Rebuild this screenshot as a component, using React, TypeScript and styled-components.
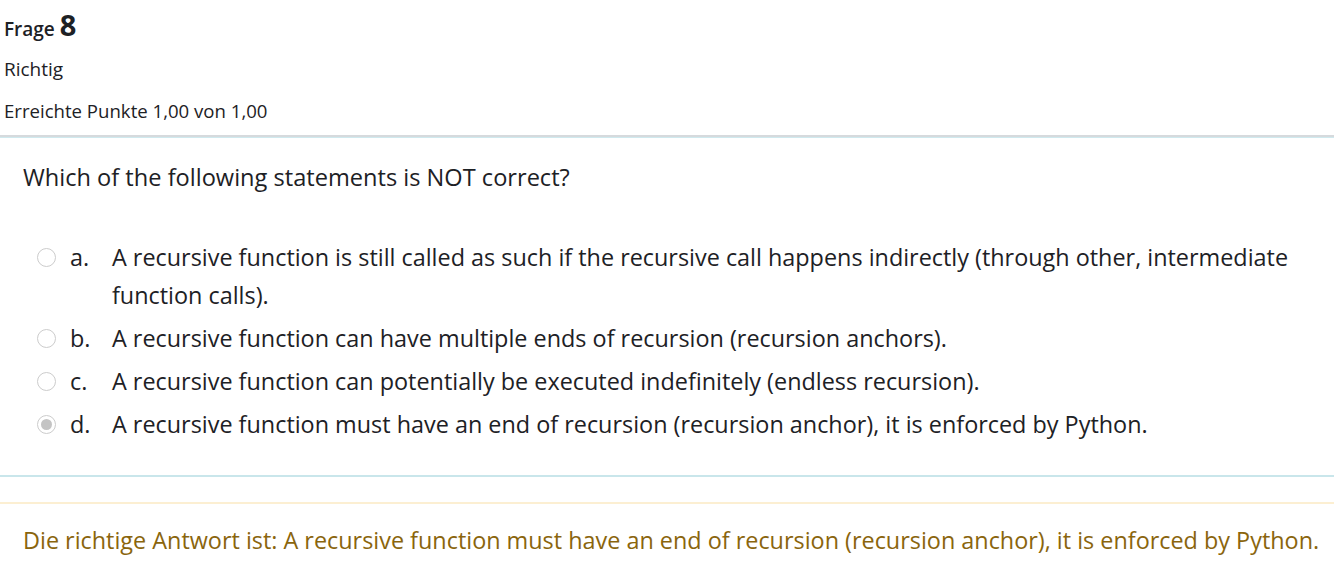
import styled, { createGlobalStyle } from 'styled-components'

const GlobalStyle = createGlobalStyle`
  html, body {
    margin: 0;
    padding: 0;
    background: #ffffff;
  }
  body {
    font-family: "Open Sans", "Noto Sans", sans-serif;
    color: #1d2125;
  }
`

const Page = styled.div`
  width: 1334px;
  height: 586px;
  overflow: hidden;
  background: #fff;
`

const Info = styled.div`
  padding: 10px 4px 0 4px;
`

const QuestionNo = styled.h3`
  margin: 0;
  font-size: 19px;
  font-weight: 600;
  line-height: 30px;
`

const Number = styled.span`
  font-size: 29px;
  font-weight: 700;
`

const State = styled.div`
  margin-top: 12px;
  font-size: 19px;
  line-height: 26px;
`

const Grade = styled.div`
  margin-top: 16px;
  font-size: 18.6px;
  line-height: 26px;
`

const Formulation = styled.div`
  margin-top: 11px;
  border-top: 2px solid #d6dadd;
  border-bottom: 2px solid #c9e6eb;
  box-shadow: inset 0 1px 0 #cfe9ee;
  padding: 22px 23px 32px 23px;
`

const QText = styled.div`
  font-size: 23.6px;
  line-height: 36px;
`

const Answers = styled.div`
  margin-top: 43px;
  display: flex;
  flex-direction: column;
  gap: 5px;
  padding-left: 14px;
`

const Option = styled.div`
  display: grid;
  grid-template-columns: 19px 28px 1fr;
  column-gap: 14px;
  align-items: start;
  font-size: 23.4px;
  line-height: 38px;
`

const Radio = styled.span<{ $checked?: boolean }>`
  margin-top: 10px;
  width: 19px;
  height: 19px;
  box-sizing: border-box;
  border-radius: 50%;
  border: 1.5px solid #cccccc;
  background: #fff;
  display: flex;
  align-items: center;
  justify-content: center;

  &::after {
    content: '';
    display: ${(p) => (p.$checked ? 'block' : 'none')};
    width: 11px;
    height: 11px;
    border-radius: 50%;
    background: #c4c4c4;
  }
`

const Letter = styled.span``

const Label = styled.span``

const Feedback = styled.div`
  margin-top: 25px;
  border-top: 2px solid #fcefd2;
  padding: 17px 0 17px 23px;
  font-size: 23.4px;
  line-height: 38px;
  white-space: nowrap;
  color: #8a650d;
`

const answers = [
  {
    letter: 'a.',
    text: 'A recursive function is still called as such if the recursive call happens indirectly (through other, intermediate function calls).',
  },
  { letter: 'b.', text: 'A recursive function can have multiple ends of recursion (recursion anchors).' },
  { letter: 'c.', text: 'A recursive function can potentially be executed indefinitely (endless recursion).' },
  {
    letter: 'd.',
    text: 'A recursive function must have an end of recursion (recursion anchor), it is enforced by Python.',
    checked: true,
  },
]

export default function App() {
  return (
    <Page>
      <GlobalStyle />
      <Info>
        <QuestionNo>
          Frage <Number>8</Number>
        </QuestionNo>
        <State>Richtig</State>
        <Grade>Erreichte Punkte 1,00 von 1,00</Grade>
      </Info>
      <Formulation>
        <QText>Which of the following statements is NOT correct?</QText>
        <Answers>
          {answers.map((a) => (
            <Option key={a.letter}>
              <Radio $checked={a.checked} />
              <Letter>{a.letter}</Letter>
              <Label>{a.text}</Label>
            </Option>
          ))}
        </Answers>
      </Formulation>
      <Feedback>
        Die richtige Antwort ist: A recursive function must have an end of recursion (recursion anchor), it is
        enforced by Python.
      </Feedback>
    </Page>
  )
}
